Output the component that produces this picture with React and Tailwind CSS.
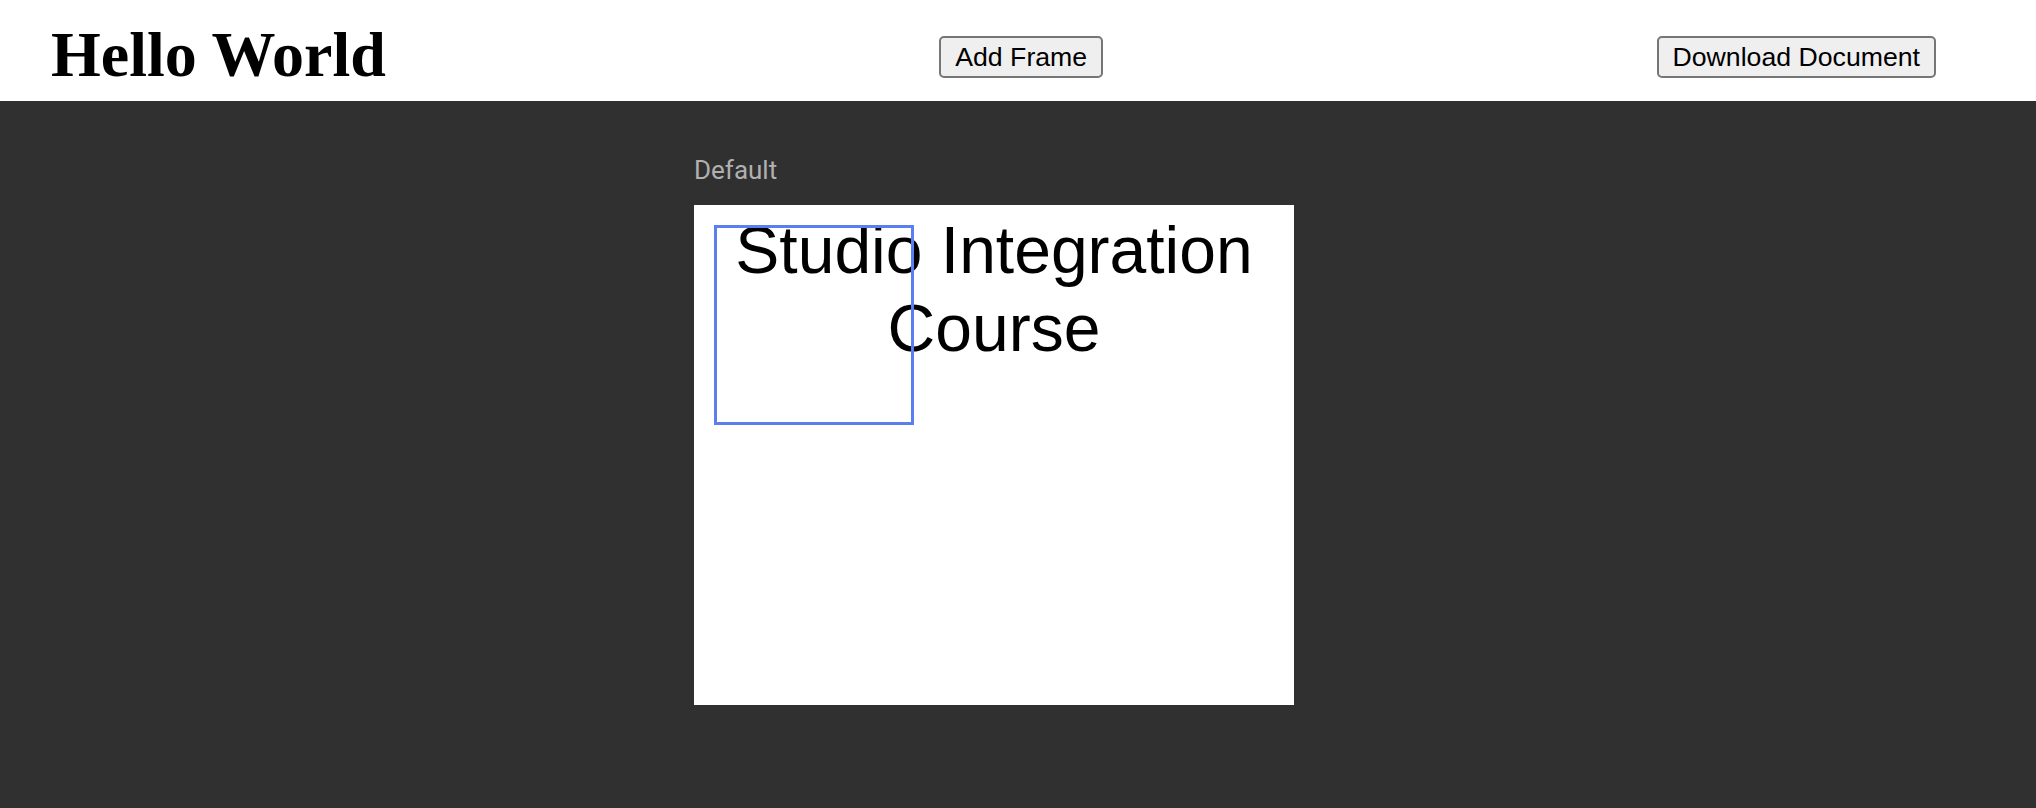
export default function App() {
  return (
    <div className="min-h-screen bg-[#303030]">
      {/* top bar */}
      <header className="flex h-[101px] items-start justify-between bg-white pl-[51px] pr-[100px]">
        <h1 className="mt-[23px] font-['Liberation_Serif',serif] text-[64px] font-bold leading-[64px] text-black">
          Hello World
        </h1>
        <button className="mt-[36px] flex h-[42px] items-center rounded-[5px] border-2 border-[#767676] bg-[#efefef] px-[14px] font-['Liberation_Sans',Arial,sans-serif] text-[26.67px] text-black">
          Add Frame
        </button>
        <button className="mt-[36px] flex h-[42px] items-center rounded-[5px] border-2 border-[#767676] bg-[#efefef] px-[14px] font-['Liberation_Sans',Arial,sans-serif] text-[26.67px] text-black">
          Download Document
        </button>
      </header>

      {/* frames */}
      <main className="flex justify-center pr-[48px] pt-[54px]">
        <div className="flex flex-col">
          <div className="mb-[20px] font-['Roboto',sans-serif] text-[26px] leading-[30px] text-[#b0b0b0]">
            Default
          </div>
          <div className="relative h-[500px] w-[600px] bg-white">
            <p className="pt-[6px] text-center font-['Liberation_Sans',Arial,sans-serif] text-[66px] leading-[78px] text-black">
              Studio Integration
              <br />
              Course
            </p>
            <div className="absolute left-[20px] top-[20px] h-[200px] w-[200px] border-[3px] border-[#5b7ef0]" />
          </div>
        </div>
      </main>
    </div>
  );
}
